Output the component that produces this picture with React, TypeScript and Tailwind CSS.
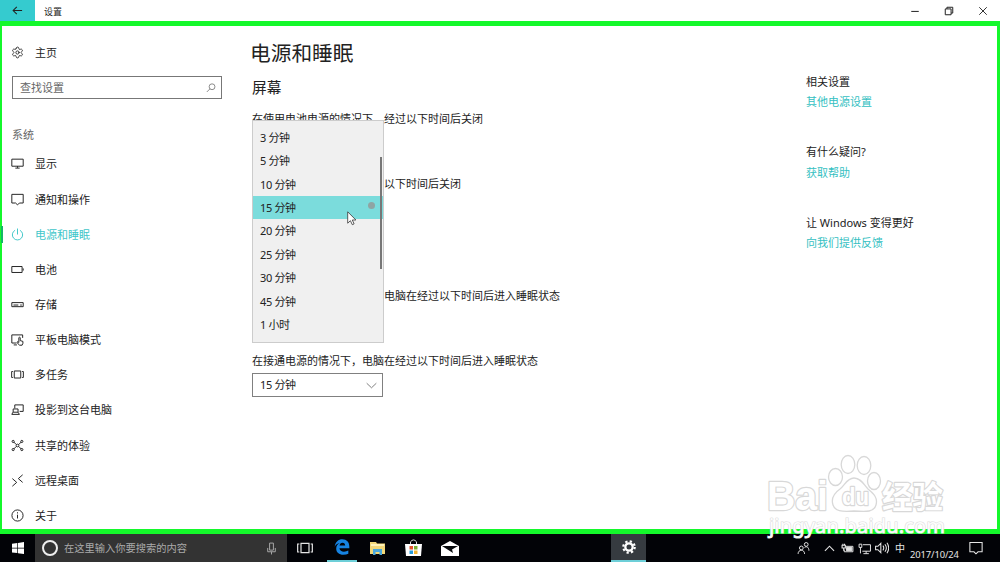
import {FC, ReactNode} from "react";
import {Settings} from "lucide-react";

interface IconProps {
    children: ReactNode;
    className?: string;
    size?: number;
}

// Все иконки рисуются на сетке 24x24
const Icon: FC<IconProps> = ({children, className = "", size = 13}) => (
    <svg width={size} height={size} viewBox="0 0 24 24" fill="none" stroke="currentColor" strokeWidth={1.8} className={`shrink-0 ${className}`}>
        {children}
    </svg>
);

const menu: Array<{name: string, icon: ReactNode}> = [
    {name: "显示", icon: <path d="M1.500 4h21v13h-21zM12 17v3M8 20.500h8"/>},
    {name: "通知和操作", icon: <path d="M1.500 2.500h21v16h-7L12 22l-3.500-3.500h-7z"/>},
    {name: "电源和睡眠", icon: <path d="M12 1v11M7.500 4.200a9.500 9.500 0 1 0 9 0"/>},
    {name: "电池", icon: <path d="M1.500 6.500h19v11h-19zM22.500 10v4"/>},
    {name: "存储", icon: <path d="M1.500 8.500h21v7.500h-21zM4.500 13h9M17 13h3"/>},
    {name: "平板电脑模式", icon: <path d="M10 18.500H1.500v-15h20V9M5 22h6M14 21l-3-4 1.500-1 2 1.500V8.500q1.500-1.500 2.500 0V14l5 1.500v3.500l-1.500 3.500h-5z"/>},
    {name: "多任务", icon: <path d="M6 5.500h12v13H6zM3.500 6.500H1.200v11h2.300M20.500 6.500h2.300v11h-2.300"/>},
    {name: "投影到这台电脑", icon: <path d="M7 10V3.500h15.500v12H16M4 11h9v6H4zM3.500 17L1.500 21h14L13 17"/>},
    {name: "共享的体验", icon: <><path d="M5 5.500l5 5M19 5.500l-5 5M5 18.500l5-5M19 18.500l-5-5"/><circle cx="12" cy="12" r="2.500"/><circle cx="4" cy="4.500" r="2"/><circle cx="20" cy="4.500" r="2"/><circle cx="4" cy="19.500" r="2"/><circle cx="20" cy="19.500" r="2"/></>},
    {name: "远程桌面", icon: <path d="M2.500 8.500l8 7-8 7M21.500 1.500L13.500 8.500l8 7"/>},
    {name: "关于", icon: <><circle cx="12" cy="12" r="10.300"/><path d="M12 10.500v7M12 6v2.200"/></>},
];

const options = ["3 分钟", "5 分钟", "10 分钟", "15 分钟", "20 分钟", "25 分钟", "30 分钟", "45 分钟", "1 小时"];

const related = [
    {title: "相关设置", link: "其他电源设置"},
    {title: "有什么疑问?", link: "获取帮助"},
    {title: "让 Windows 变得更好", link: "向我们提供反馈"},
];

const TitleBar: FC = () => (
    <header className="flex h-[21px] items-center bg-white">
        <div className="flex h-full w-[35px] items-center justify-center bg-[#35cbcf]">
            <Icon size={11}><path d="M2.500 12H22M10.500 4L2.500 12l8 8" strokeWidth={2.300}/></Icon>
        </div>
        <span className="mt-px ml-[9px] text-[9px] leading-none">设置</span>
        <div className="ml-auto flex h-full items-center pt-px">
            <div className="flex w-[34px] justify-center"><Icon size={10}><path d="M3 13h18" strokeWidth={2.400}/></Icon></div>
            <div className="flex w-[34px] justify-center"><Icon size={10}><path d="M3 7h14v14H3zM7 7V3h14v14h-4" strokeWidth={2.400}/></Icon></div>
            <div className="flex w-[34px] justify-center"><Icon size={10}><path d="M3 3l18 18M21 3L3 21" strokeWidth={2.200}/></Icon></div>
        </div>
    </header>
);

const Sidebar: FC = () => (
    <aside className="w-[250px] pl-[9px]">
        <div className="mt-[16px] flex h-5 items-center">
            <Settings size={13} strokeWidth={1.600} className="shrink-0"/>
            <span className="ml-[11px]">主页</span>
        </div>
        <div className="mt-[14px] ml-px flex h-[23px] w-[210px] items-center justify-between border border-[#777] pr-[5px] pl-[7px] text-[#666]">
            <span>查找设置</span>
            <Icon size={10}><circle cx="14.500" cy="9" r="7"/><path d="M9.500 14L2 21.500"/></Icon>
        </div>
        <p className="mt-[27px] ml-px h-[18px] leading-[18px] text-[#666]">系统</p>
        <nav className="mt-[2.4px]">
            {menu.map((item, index) => (
                <div key={item.name} className={`relative flex h-[35.15px] items-center ${index === 2 ? "text-[#3fc6c9]" : ""}`}>
                    {index === 2 && <i className="absolute -left-[10px] h-[17px] w-[2px] bg-[#14b865]"/>}
                    <Icon>{item.icon}</Icon>
                    <span className="ml-[11px]">{item.name}</span>
                </div>
            ))}
        </nav>
    </aside>
);

const SleepSettings: FC = () => (
    <section className="relative w-[554px]">
        <h1 className="mt-[12px] -ml-[2px] h-[30px] text-[20.7px] leading-[30px]">电源和睡眠</h1>
        <h2 className="mt-[9px] h-5 text-[14.7px] leading-5">屏幕</h2>
        <p className="mt-[14px] h-4 leading-4">在使用电池电源的情况下，经过以下时间后关闭</p>
        <p className="mt-[49px] ml-[132px] h-4 leading-4">以下时间后关闭</p>
        <p className="mt-[96px] ml-[132px] h-4 leading-4">电脑在经过以下时间后进入睡眠状态</p>
        <p className="mt-[49px] h-4 leading-4">在接通电源的情况下，电脑在经过以下时间后进入睡眠状态</p>
        <div className="mt-[4px] flex h-[24px] w-[131px] items-center justify-between border border-[#808080] pr-[5px] pl-[7px]">
            <span className="-mt-px tracking-[-0.35px]">15 分钟</span>
            <Icon size={11} className="text-[#666]"><path d="M1.500 7L12 17 22.500 7"/></Icon>
        </div>

        {/* Открытый список поверх настроек */}
        <div className="absolute top-[94px] left-0 h-[223px] w-[132px] border border-[#ccc] bg-[#f0f0f0] pt-[4.5px] tracking-[-0.35px]">
            {options.map((option) => (
                <div key={option} className={`flex h-[23.45px] items-center pl-[7px] ${option === "15 分钟" ? "bg-[#7bdcdc]" : ""}`}>
                    {option}
                </div>
            ))}
            <i className="absolute top-[36px] right-[1px] h-[112px] w-[2px] bg-[#777]"/>
            <i className="absolute top-[81px] right-[8px] size-[7px] rounded-full bg-[#8fa5a3]"/>
            <svg className="absolute top-[90px] left-[94px]" width="10" height="15" viewBox="0 0 10 15">
                <path d="M.7.8v11.400l2.700-2.500 1.900 4 1.800-.8-1.800-3.900h3.600z" fill="#fff" stroke="#333" strokeWidth=".8"/>
            </svg>
        </div>
    </section>
);

const Watermark: FC = () => (
    <svg className="absolute top-[450px] left-[762px]" width="190" height="92" viewBox="0 0 190 92">
        <g fill="#fff" stroke="#d8d8d8" strokeWidth="1.300">
            <ellipse cx="73.500" cy="27" rx="7" ry="8.500"/>
            <ellipse cx="86" cy="14.500" rx="6.800" ry="9"/>
            <ellipse cx="102" cy="15.500" rx="6.800" ry="9"/>
            <ellipse cx="112" cy="31" rx="6.500" ry="8.500"/>
            <path d="M92 28c-7 0-9 7-14 11-7 5-9 10-7 16s8 7 21 6c13 1 20 1 22-6s-2-11-8-16c-4-4-7-11-14-11z"/>
        </g>
        <g fontFamily="'Liberation Sans', 'Noto Sans CJK SC', sans-serif" fontWeight="700" fill="#fff" stroke="#d8d8d8" strokeWidth="2.400" strokeLinejoin="round" paintOrder="stroke">
            <text x="5" y="60" fontSize="40" textLength="61" lengthAdjust="spacingAndGlyphs">Bai</text>
            <text x="80" y="55" fontSize="24" textLength="27" lengthAdjust="spacingAndGlyphs">du</text>
            <text x="120" y="58" fontSize="31" textLength="61" lengthAdjust="spacingAndGlyphs">经验</text>
        </g>
        <text x="7" y="83" fontSize="20" textLength="176" fontFamily="'Noto Sans', sans-serif" fill="#fff" fillOpacity=".95" stroke="#ddd" strokeWidth="1.200" paintOrder="stroke">jingyan.baidu.com</text>
    </svg>
);

const Taskbar: FC = () => (
    <footer className="flex h-7 items-center bg-[#020307] text-[#e5e5e5]">
        <div className="flex w-[35px] justify-center text-white">
            <svg width="12" height="12" viewBox="0 0 12 12" fill="currentColor">
                <path d="M0 1.700L5.300 1v4.700H0zM6 .9L12 0v5.700H6zM0 6.400h5.300v4.700L0 10.400zM6 6.400h6V12l-6-.8z"/>
            </svg>
        </div>
        <div className="flex h-full w-[252px] items-center bg-[#333] pr-[9px] pl-[7px]">
            <i className="size-[16px] rounded-full border-2 border-[#eee]"/>
            <span className="ml-[6px] text-[10.25px] text-[#aaa]">在这里输入你要搜索的内容</span>
            <Icon className="ml-auto text-[#aaa]"><path d="M8.500 2h7v13h-7zM5 11v7h14v-7M12 18v5"/></Icon>
        </div>
        <div className="flex w-[36px] justify-center">
            <Icon size={16}><path d="M6 5h12v14H6zM3.500 6H1v12h2.500M20.500 6H23v12h-2.500"/></Icon>
        </div>
        <div className="flex h-full w-[38px] justify-center">
            <div className="flex h-full w-[30px] items-center justify-center border-b-2 border-[#6dcfd8]">
                <svg width="16" height="16" viewBox="0 0 24 24" fill="#1683e2">
                    <path d="M1 11.500C2 4.500 6.500.5 12.500.5 19 .5 23 5 23 11.500V14H8.200c.3 3.500 3.200 5 6.800 5 2.500 0 4.600-.6 6.500-1.700v4.800c-2 1-4.500 1.500-7.500 1.500C7.500 23.600 3.300 20 3.300 14.600c0-4 2-7 5.200-8.600C5 6.600 2.600 8.600 1 11.500zm7.300-1.700h8.500c0-2.700-1.500-4.300-4-4.300S8.700 7.200 8.300 9.800z"/>
                </svg>
            </div>
        </div>
        <div className="flex w-[33px] justify-center">
            <svg width="17" height="15" viewBox="0 0 17 15">
                <path d="M1 1h6l1 1.500h8V13H1z" fill="#f3d878"/>
                <path d="M2 3h13v2H2z" fill="#fff2b9"/>
                <path d="M4 14V8h9v6h-2.500v-3h-4v3z" fill="#4ba7db"/>
            </svg>
        </div>
        <div className="flex w-[38px] justify-center">
            <svg width="17" height="18" viewBox="0 0 17 18">
                <path d="M5.500 5V2.800Q8.500-1 11.500 2.800V5" fill="none" stroke="#ddd"/>
                <path d="M0 5h17l-1 12H1z" fill="#fff"/>
                <path d="M4.500 7h3.500v3.500H4.500z" fill="#e5532d"/>
                <path d="M9 7h3.500v3.500H9z" fill="#7cae32"/>
                <path d="M4.500 11.500h3.500V15H4.500z" fill="#2799d8"/>
                <path d="M9 11.500h3.500V15H9z" fill="#f2b331"/>
            </svg>
        </div>
        <div className="flex w-[35px] justify-center">
            <svg width="18" height="15" viewBox="0 0 18 15">
                <path d="M0 5l9-5 9 5v10H0z" fill="#fff"/>
                <path d="M1 5h16l-6 3.500 1 3.500z" fill="#080a0d"/>
            </svg>
        </div>
        <div className="ml-[144px] flex h-full w-[35px] items-center justify-center border-b-2 border-[#6dcfd8] bg-[#363b40] text-white">
            <Icon size={14}>
                <circle cx="12" cy="12" r="6.300" strokeWidth={4}/>
                <circle cx="12" cy="12" r="9.800" strokeWidth={3.800} strokeDasharray="3.850 3.850"/>
            </Icon>
        </div>
        <div className="ml-[151px] flex items-center">
            <Icon size={13}><circle cx="8" cy="11" r="3.500"/><path d="M2 22c0-9 12-9 12 0"/><circle cx="17" cy="4.500" r="3.500"/><path d="M14 10c4-3 8 0 8 6"/></Icon>
            <Icon size={11} className="ml-[14px]"><path d="M2 17L12 7l10 10" strokeWidth={2.400}/></Icon>
            <Icon size={13} className="ml-[6px]"><path d="M8 8h14v10H6v-4"/><path d="M10 10h10v6H10z" fill="currentColor"/><path d="M2 6h6v5H2zM3.500 3v3M6.500 3v3M5 11v5" strokeWidth={2}/></Icon>
            <Icon size={13} className="ml-[4px]"><path d="M9 5h14v12H8M15 17v4M10 21.500h10M2 4h5v6H2zM4.500 10v11"/></Icon>
            <Icon size={14} className="ml-[4px]"><path d="M1 9h4l5-5v16l-5-5H1zM13.500 8q3 4 0 8M17 5.500q5 6.500 0 13M20.500 3q6 9 0 18"/></Icon>
            <span className="ml-[6px] text-[10px] leading-none">中</span>
        </div>
        <span className="mt-[13px] ml-[5px] w-[50px] text-[9.4px] leading-none tracking-[-0.1px] whitespace-nowrap">2017/10/24</span>
        <Icon size={14} className="mr-[17px] ml-auto"><path d="M1.500 2.500h21v16h-7L12 22l-3.500-3.500h-7z"/></Icon>
    </footer>
);

const App: FC = () => (
    <div className="relative flex h-[562px] w-[1000px] flex-col overflow-hidden bg-white font-['Noto_Sans','Noto_Sans_CJK_SC',sans-serif] text-[11px] leading-none text-[#222]">
        <TitleBar/>
        <main className="flex h-[513px] border-t-[5px] border-r-[3px] border-b-[5px] border-l-2 border-[#14f82b]">
            <Sidebar/>
            <SleepSettings/>
            <aside className="flex flex-col gap-[30px] pt-[46px]">
                {related.map((item) => (
                    <div key={item.title} className="leading-[20.2px] whitespace-nowrap">
                        <p>{item.title}</p>
                        <a className="text-[#35bfc2]">{item.link}</a>
                    </div>
                ))}
            </aside>
        </main>
        <Taskbar/>
        <Watermark/>
    </div>
);

export default App;
